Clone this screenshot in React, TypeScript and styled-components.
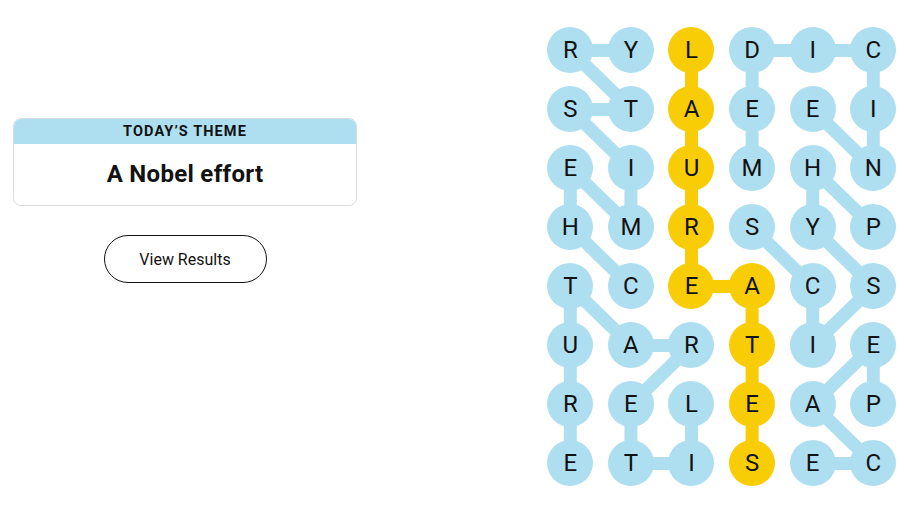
import React from "react";
import styled, { createGlobalStyle } from "styled-components";

const GlobalStyle = createGlobalStyle`
  html, body { margin: 0; padding: 0; background: #ffffff; }
  body { font-family: Roboto, "Liberation Sans", Arial, sans-serif; color: #121212; }
`;

const BLUE = "#aedff0";
const YELLOW = "#f8cd05";
const COL_W = 60.6;
const ROW_H = 59;
const ROWS = 8;
const COLS = 6;

const LETTERS = [
  "RYLDIC",
  "STAEEI",
  "EIUMHN",
  "HMRSYP",
  "TCEACS",
  "UARTIE",
  "RELEAP",
  "ETISEC",
];

type Pt = [number, number];

const WORDS: { cells: Pt[]; spangram?: boolean }[] = [
  { cells: [[4, 1], [3, 0], [2, 0], [3, 1], [2, 1], [1, 0], [1, 1], [0, 0], [0, 1]] },
  { cells: [[6, 2], [7, 2], [7, 1], [6, 1], [5, 2], [5, 1], [4, 0], [5, 0], [6, 0], [7, 0]] },
  { cells: [[2, 3], [1, 3], [0, 3], [0, 4], [0, 5], [1, 5], [2, 5], [1, 4]] },
  { cells: [[3, 5], [2, 4], [3, 4], [4, 5], [5, 4], [4, 4], [3, 3]] },
  { cells: [[6, 5], [5, 5], [6, 4], [7, 5], [7, 4]] },
  { cells: [[0, 2], [1, 2], [2, 2], [3, 2], [4, 2], [4, 3], [5, 3], [6, 3], [7, 3]], spangram: true },
];

const yellowSet = new Set(
  WORDS.filter((w) => w.spangram).flatMap((w) => w.cells.map(([r, c]) => `${r}-${c}`))
);

const Page = styled.main`
  display: flex;
  flex-direction: row;
  align-items: flex-start;
  width: 904px;
  height: 509px;
  box-sizing: border-box;
  padding: 20px 0 0 13px;
`;

const Side = styled.section`
  width: 344px;
  display: flex;
  flex-direction: column;
  align-items: center;
  padding-top: 98px;
  gap: 29px;
`;

const ThemeCard = styled.div`
  width: 344px;
  box-sizing: border-box;
  border: 1px solid #dcdcdc;
  border-radius: 8px;
  overflow: hidden;
  background: #fff;
`;

const ThemeHeader = styled.div`
  background: ${BLUE};
  height: 25px;
  display: flex;
  align-items: center;
  justify-content: center;
  font-family: Roboto, "Liberation Sans", Arial, sans-serif;
  font-weight: 700;
  font-size: 14.5px;
  letter-spacing: 1.1px;
  text-transform: uppercase;
  color: #121212;
`;

const ThemeTitle = styled.div`
  height: 61px;
  display: flex;
  align-items: center;
  justify-content: center;
  font-family: Roboto, "Liberation Sans", Arial, sans-serif;
  font-weight: 700;
  font-size: 24px;
  letter-spacing: 0.3px;
  color: #121212;
  padding-bottom: 2px;
  box-sizing: border-box;
`;

const ResultsButton = styled.button`
  width: 163px;
  height: 48px;
  border: 1px solid #121212;
  border-radius: 24px;
  background: #fff;
  font-family: Roboto, "Liberation Sans", Arial, sans-serif;
  font-size: 16px;
  color: #121212;
  cursor: pointer;
  padding: 0;
`;

const Board = styled.section`
  position: relative;
  margin-left: 183px;
  margin-top: 0.5px;
  width: ${COL_W * COLS}px;
  height: ${ROW_H * ROWS}px;
`;

const Connectors = styled.svg`
  position: absolute;
  inset: 0;
  z-index: 0;
`;

const Grid = styled.div`
  position: relative;
  z-index: 1;
  display: grid;
  grid-template-columns: repeat(${COLS}, ${COL_W}px);
  grid-template-rows: repeat(${ROWS}, ${ROW_H}px);
`;

const Cell = styled.div`
  display: flex;
  align-items: center;
  justify-content: center;
`;

const Letter = styled.button<{ $found: "blue" | "yellow" }>`
  width: 46px;
  height: 46px;
  border-radius: 50%;
  border: none;
  padding: 0;
  background: ${(p) => (p.$found === "yellow" ? YELLOW : BLUE)};
  font-family: Roboto, "Liberation Sans", Arial, sans-serif;
  font-size: 24px;
  font-weight: 400;
  color: #121212;
  display: flex;
  align-items: center;
  justify-content: center;
`;

const cx = (c: number) => c * COL_W + COL_W / 2;
const cy = (r: number) => r * ROW_H + ROW_H / 2;

export default function App() {
  return (
    <>
      <GlobalStyle />
      <Page>
        <Side>
          <ThemeCard>
            <ThemeHeader>Today’s theme</ThemeHeader>
            <ThemeTitle>A Nobel effort</ThemeTitle>
          </ThemeCard>
          <ResultsButton>View Results</ResultsButton>
        </Side>
        <Board>
          <Connectors width={COL_W * COLS} height={ROW_H * ROWS}>
            {WORDS.map((w, wi) =>
              w.cells.slice(1).map(([r, c], i) => {
                const [pr, pc] = w.cells[i];
                return (
                  <line
                    key={`${wi}-${i}`}
                    x1={cx(pc)}
                    y1={cy(pr)}
                    x2={cx(c)}
                    y2={cy(r)}
                    stroke={w.spangram ? YELLOW : BLUE}
                    strokeWidth={13}
                  />
                );
              })
            )}
          </Connectors>
          <Grid>
            {LETTERS.map((row, r) =>
              row.split("").map((ch, c) => (
                <Cell key={`${r}-${c}`}>
                  <Letter $found={yellowSet.has(`${r}-${c}`) ? "yellow" : "blue"}>{ch}</Letter>
                </Cell>
              ))
            )}
          </Grid>
        </Board>
      </Page>
    </>
  );
}
